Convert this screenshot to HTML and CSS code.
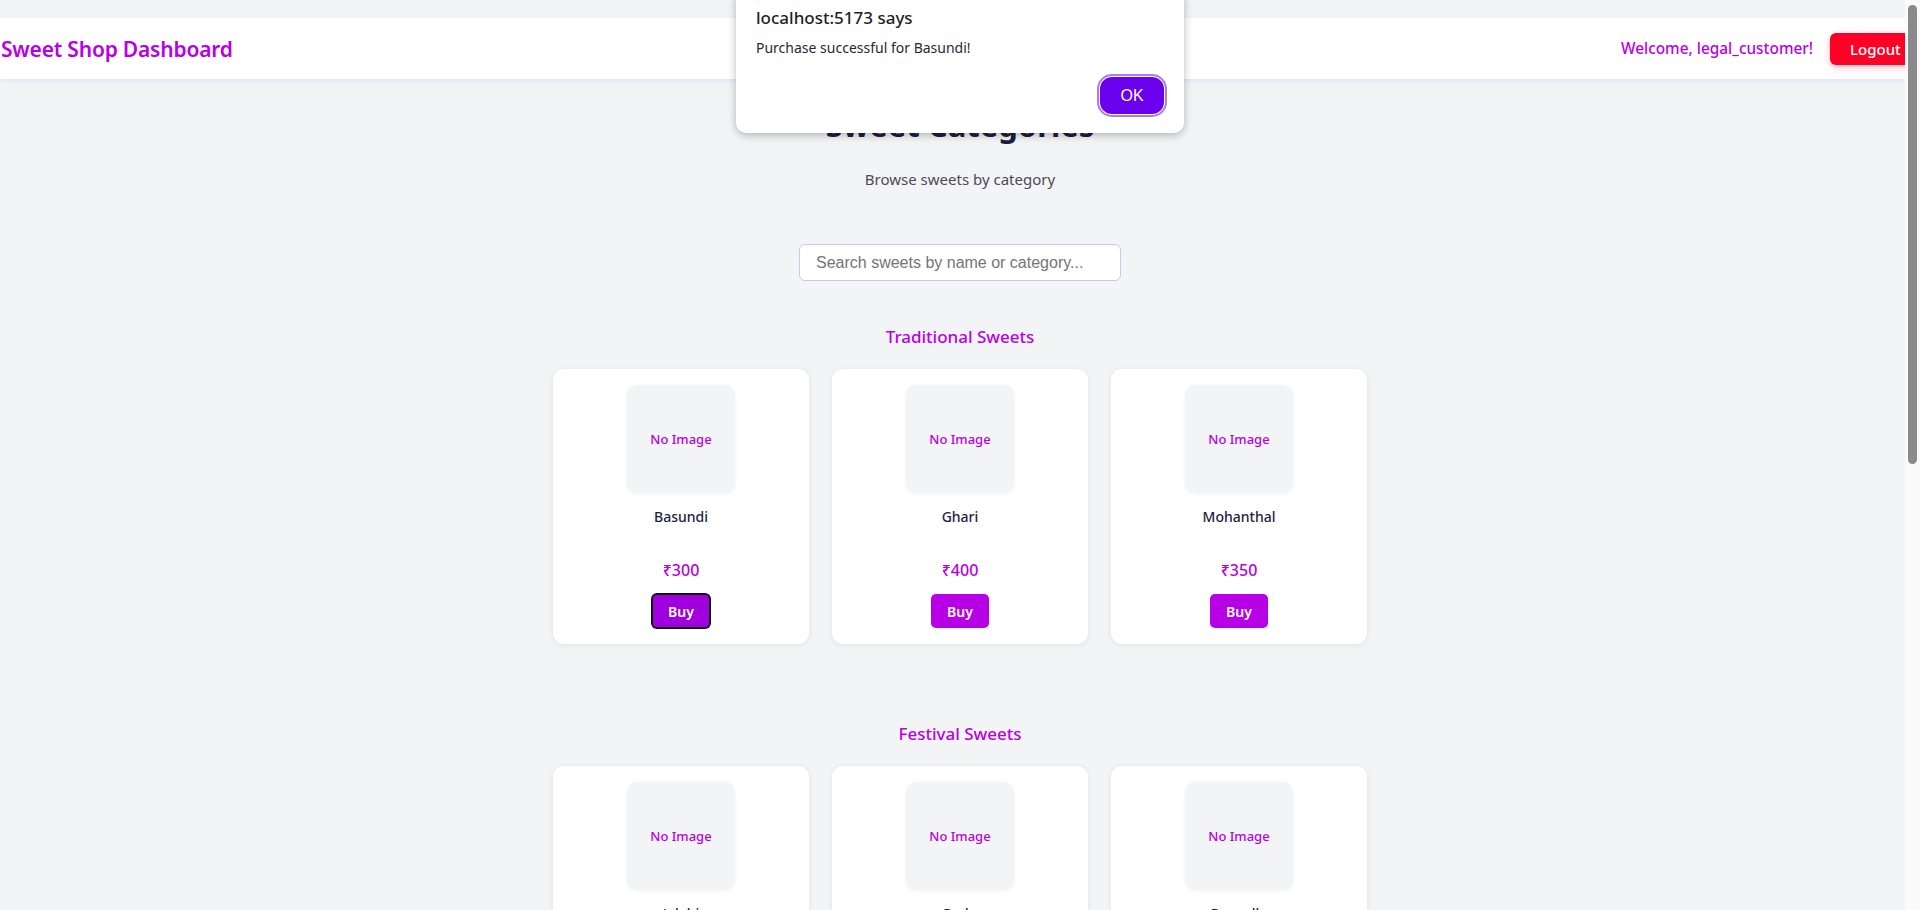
FILE: index.html
```html
<!DOCTYPE html>
<html lang="en">
<head>
<meta charset="utf-8">
<title>Sweet Shop Dashboard</title>
<link rel="stylesheet" href="styles.css">
</head>
<body>
<div class="page">
  <div class="frame">
    <header class="topbar">
      <h1 class="brand">Sweet Shop Dashboard</h1>
      <div class="user">
        <span class="welcome">Welcome, legal_customer!</span>
        <button class="logout">Logout</button>
      </div>
    </header>
    <main class="main">
      <h2 class="page-title">Sweet Categories</h2>
      <p class="subtitle">Browse sweets by category</p>
      <input class="search" type="text" placeholder="Search sweets by name or category...">
      <div class="categories">
        <section class="category">
          <h3 class="cat-title">Traditional Sweets</h3>
          <div class="grid">
            <div class="card">
              <div class="thumb">No Image</div>
              <div class="name">Basundi</div>
              <div class="price">₹300</div>
              <button class="buy focused">Buy</button>
            </div>
            <div class="card">
              <div class="thumb">No Image</div>
              <div class="name">Ghari</div>
              <div class="price">₹400</div>
              <button class="buy">Buy</button>
            </div>
            <div class="card">
              <div class="thumb">No Image</div>
              <div class="name">Mohanthal</div>
              <div class="price">₹350</div>
              <button class="buy">Buy</button>
            </div>
          </div>
        </section>
        <section class="category">
          <h3 class="cat-title">Festival Sweets</h3>
          <div class="grid">
            <div class="card">
              <div class="thumb">No Image</div>
              <div class="name">Jalebi</div>
              <div class="price">₹250</div>
              <button class="buy">Buy</button>
            </div>
            <div class="card">
              <div class="thumb">No Image</div>
              <div class="name">Peda</div>
              <div class="price">₹300</div>
              <button class="buy">Buy</button>
            </div>
            <div class="card">
              <div class="thumb">No Image</div>
              <div class="name">Rasgulla</div>
              <div class="price">₹200</div>
              <button class="buy">Buy</button>
            </div>
          </div>
        </section>
      </div>
    </main>
  </div>
  <div class="dialog">
    <div class="dialog-title">localhost:5173 says</div>
    <div class="dialog-msg">Purchase successful for Basundi!</div>
    <div class="dialog-actions"><button class="ok">OK</button></div>
  </div>
</div>
<div class="scrollbar"><div class="thumb-bar"></div></div>
</body>
</html>
```

FILE: styles.css
```css
html, body {
  margin: 0;
  height: 910px;
  overflow: hidden;
}
body {
  display: flex;
  background: #f3f4f6;
  font-family: "Noto Sans", "Open Sans", sans-serif;
}
.page {
  position: relative;
  width: 1905px;
  height: 910px;
  overflow: hidden;
  flex: none;
}
.frame {
  width: 1920px;
  padding-top: 18px;
}
.topbar {
  height: 61px;
  background: #fff;
  display: flex;
  align-items: center;
  justify-content: space-between;
  padding-left: 1px;
  box-shadow: 0 2px 5px rgba(99, 102, 241, 0.12);
}
.brand {
  margin: 0;
  font-size: 21px;
  font-weight: 600;
  color: #b800e6;
  letter-spacing: -0.2px;
}
.user {
  display: flex;
  align-items: center;
  gap: 17px;
}
.welcome {
  font-size: 15.4px;
  font-weight: 500;
  color: #b800e6;
}
.logout {
  width: 90px;
  height: 32px;
  border: 0;
  border-radius: 6px;
  background: #ff0026;
  color: #fff;
  font-family: inherit;
  font-size: 15px;
  font-weight: 500;
  text-align: left;
  padding-left: 20px;
  box-shadow: 0 2px 6px rgba(255, 0, 38, 0.3);
}
.main {
  display: flex;
  flex-direction: column;
  align-items: center;
}
.page-title {
  margin: 26px 0 0;
  font-size: 31px;
  line-height: 40px;
  font-weight: 700;
  color: #1f1d3d;
}
.subtitle {
  margin: 22px 0 0;
  font-size: 15px;
  line-height: 24px;
  color: #4b4b5a;
}
.search {
  margin-top: 53px;
  width: 322px;
  height: 37px;
  box-sizing: border-box;
  border: 1px solid #c9c6f5;
  border-radius: 6px;
  background: #fff;
  padding: 0 16px;
  font-family: "Liberation Sans", Arial, sans-serif;
  font-size: 16px;
  outline: none;
}
.search::placeholder {
  color: #757575;
}
.categories {
  margin-top: 42px;
  display: flex;
  flex-direction: column;
  gap: 76px;
}
.category {
  display: flex;
  flex-direction: column;
  align-items: center;
}
.cat-title {
  margin: 0 0 18px;
  font-size: 17px;
  line-height: 28px;
  font-weight: 500;
  color: #b800e6;
}
.grid {
  display: grid;
  grid-template-columns: repeat(3, 256px);
  gap: 23px;
}
.card {
  background: #fff;
  border-radius: 11px;
  box-shadow: 0 1px 6px rgba(0, 0, 0, 0.08);
  padding: 16px 16px 16px;
  display: flex;
  flex-direction: column;
  align-items: center;
}
.thumb {
  width: 108px;
  height: 108px;
  border-radius: 10px;
  background: #f3f4f6;
  box-shadow: 0 1px 4px rgba(0, 0, 0, 0.05);
  display: flex;
  align-items: center;
  justify-content: center;
  font-size: 13px;
  font-weight: 500;
  color: #b800e6;
}
.name {
  margin-top: 13px;
  font-size: 14px;
  line-height: 22px;
  font-weight: 500;
  color: #1f1d3d;
}
.price {
  margin-top: 30px;
  font-size: 16px;
  line-height: 24px;
  font-weight: 500;
  color: #b800e6;
}
.buy {
  margin-top: 12px;
  width: 58px;
  height: 34px;
  border: 0;
  border-radius: 5px;
  background: #b700e6;
  color: #fff;
  font-family: inherit;
  font-size: 14px;
  font-weight: 600;
}
.buy.focused {
  background: #a000de;
  box-shadow: 0 0 0 1px #111, inset 0 0 0 1px #111;
}
.dialog {
  position: absolute;
  left: 736px;
  top: -14px;
  width: 448px;
  height: 147px;
  box-sizing: border-box;
  background: #fff;
  border-radius: 10px;
  box-shadow: 0 2px 8px rgba(0, 0, 0, 0.28);
  padding: 20px 20px 0;
  display: flex;
  flex-direction: column;
}
.dialog-title {
  font-size: 17px;
  line-height: 24px;
  font-weight: 500;
  color: #1f1f1f;
}
.dialog-msg {
  margin-top: 8px;
  font-size: 14px;
  line-height: 20px;
  color: #2a2a2a;
}
.dialog-actions {
  margin-top: 19px;
  display: flex;
  justify-content: flex-end;
}
.ok {
  width: 64px;
  height: 37px;
  border: 0;
  border-radius: 12px;
  background: #6a00ee;
  color: #fff;
  font-family: "Liberation Sans", Arial, sans-serif;
  font-size: 16px;
  outline: 2px solid #a87cf0;
  outline-offset: 1px;
}
.scrollbar {
  width: 15px;
  height: 910px;
  background: #fafafa;
  flex: none;
  padding-top: 5px;
  box-sizing: border-box;
}
.thumb-bar {
  width: 9px;
  height: 459px;
  margin-left: 3px;
  border-radius: 5px;
  background: #8a8a8a;
}
```
